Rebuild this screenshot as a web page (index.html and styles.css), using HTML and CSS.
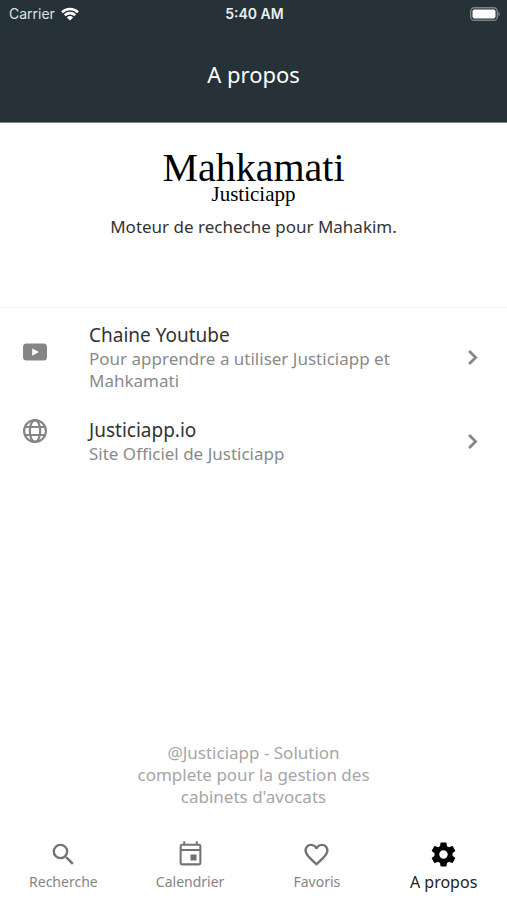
FILE: index.html
```html
<!DOCTYPE html>
<html lang="fr">
<head>
<meta charset="utf-8">
<meta name="viewport" content="width=device-width, initial-scale=1">
<title>A propos</title>
<link rel="stylesheet" href="styles.css">
</head>
<body>
<header class="app-bar">
  <div class="status">
    <span class="carrier">Carrier
      <svg class="wifi" viewBox="0 0 18 14" aria-hidden="true"><path d="M1 5.2a11.5 11.5 0 0 1 16 0M3.8 8.2a7.5 7.5 0 0 1 10.4 0" fill="none" stroke="currentColor" stroke-width="2.6"/><path d="M9 13.5 5.9 10.4a4.4 4.4 0 0 1 6.2 0z" fill="currentColor"/></svg>
    </span>
    <time class="time">5:40 AM</time>
    <svg class="battery" viewBox="0 0 30 14" aria-hidden="true"><rect x=".7" y=".7" width="26.6" height="12.6" rx="3.6" fill="none" stroke="#7b8387" stroke-width="1.4"/><rect x="2.5" y="2.5" width="23" height="9" rx="2" fill="#fff"/><path d="M28.3 4.8q1.7.7 1.7 2.2t-1.7 2.2z" fill="#7b8387"/></svg>
  </div>
  <h1 class="title">A propos</h1>
</header>
<main class="content">
  <section class="brand">
    <h2 class="brand-name">Mahkamati</h2>
    <p class="brand-sub">Justiciapp</p>
    <p class="tagline">Moteur de recheche pour Mahakim.</p>
  </section>
  <nav class="links" aria-label="Liens">
    <a class="tile tile-tall" href="#youtube">
      <svg class="tile-icon" viewBox="0 0 24 24" aria-hidden="true"><path fill="currentColor" fill-rule="evenodd" d="M3.5 3.5h17A3.5 3.5 0 0 1 24 7v10a3.5 3.5 0 0 1-3.5 3.5h-17A3.5 3.5 0 0 1 0 17V7a3.5 3.5 0 0 1 3.5-3.5zM9.2 8.5v7.2l6.8-3.6z"/></svg>
      <span class="tile-text"><span class="tile-title">Chaine Youtube</span><span class="tile-sub">Pour apprendre a utiliser Justiciapp et Mahkamati</span></span>
      <svg class="chevron" viewBox="0 0 24 24" aria-hidden="true"><path fill="currentColor" stroke="currentColor" stroke-width=".4" d="M10 6 8.59 7.41 13.17 12l-4.58 4.59L10 18l6-6z"/></svg>
    </a>
    <a class="tile" href="#site">
      <svg class="tile-icon" viewBox="0 0 24 24" aria-hidden="true"><g fill="none" stroke="currentColor" stroke-width="2.2"><circle cx="12" cy="12" r="10.9"/><ellipse cx="12" cy="12" rx="5.2" ry="10.9"/><path d="M2 8h20M2 16h20"/></g></svg>
      <span class="tile-text"><span class="tile-title">Justiciapp.io</span><span class="tile-sub">Site Officiel de Justiciapp</span></span>
      <svg class="chevron" viewBox="0 0 24 24" aria-hidden="true"><path fill="currentColor" stroke="currentColor" stroke-width=".4" d="M10 6 8.59 7.41 13.17 12l-4.58 4.59L10 18l6-6z"/></svg>
    </a>
  </nav>
  <p class="credit">@Justiciapp - Solution complete pour la gestion des cabinets d'avocats</p>
</main>
<nav class="tabs" aria-label="Navigation">
  <a class="tab" href="#recherche"><svg class="tab-icon" viewBox="0 0 24 24" aria-hidden="true"><path fill="currentColor" d="M15.5 14h-.79l-.28-.27A6.471 6.471 0 0 0 16 9.5 6.5 6.5 0 1 0 9.5 16c1.61 0 3.09-.59 4.23-1.57l.27.28v.79l5 4.99L20.49 19l-4.99-5zm-6 0C7.01 14 5 11.99 5 9.5S7.01 5 9.5 5 14 7.01 14 9.5 11.99 14 9.5 14z"/></svg>Recherche</a>
  <a class="tab" href="#calendrier"><svg class="tab-icon" viewBox="0 0 24 24" aria-hidden="true"><path fill="currentColor" fill-rule="evenodd" d="M6 1h1.6v2h8.8V1H18v2h1a2 2 0 0 1 2 2v14a2 2 0 0 1-2 2H5a2 2 0 0 1-2-2V5a2 2 0 0 1 2-2h1zM4.7 4.7v2.8h14.6V4.7zM4.7 9.2v10.1h14.6V9.2zM12 12h5v5h-5z"/></svg>Calendrier</a>
  <a class="tab" href="#favoris"><svg class="tab-icon" viewBox="0 0 24 24" aria-hidden="true"><path fill="currentColor" d="M16.5 3c-1.74 0-3.41.81-4.5 2.09C10.91 3.81 9.24 3 7.5 3 4.42 3 2 5.42 2 8.5c0 3.78 3.4 6.86 8.55 11.54L12 21.35l1.45-1.32C18.6 15.36 22 12.28 22 8.5 22 5.42 19.58 3 16.5 3zm-4.4 15.55-.1.1-.1-.1C7.14 14.24 4 11.39 4 8.5 4 6.5 5.5 5 7.5 5c1.54 0 3.04.99 3.57 2.36h1.87C13.46 5.99 14.96 5 16.5 5c2 0 3.5 1.5 3.5 3.5 0 2.89-3.14 5.74-7.9 10.05z"/></svg>Favoris</a>
  <a class="tab tab-active" href="#apropos" aria-current="page"><svg class="tab-icon" viewBox="0 0 24 24" aria-hidden="true"><path fill="currentColor" d="M19.43 12.98c.04-.32.07-.64.07-.98s-.03-.66-.07-.98l2.11-1.65c.19-.15.24-.42.12-.64l-2-3.46c-.12-.22-.39-.3-.61-.22l-2.49 1c-.52-.4-1.08-.73-1.69-.98l-.38-2.65A.488.488 0 0 0 14 2h-4c-.25 0-.46.18-.49.42l-.38 2.65c-.61.25-1.17.59-1.69.98l-2.49-1c-.23-.09-.49 0-.61.22l-2 3.46c-.13.22-.07.49.12.64l2.11 1.65c-.04.32-.07.65-.07.98s.03.66.07.98l-2.11 1.65c-.19.15-.24.42-.12.64l2 3.46c.12.22.39.3.61.22l2.49-1c.52.4 1.08.73 1.69.98l.38 2.65c.03.24.24.42.49.42h4c.25 0 .46-.18.49-.42l.38-2.65c.61-.25 1.17-.59 1.69-.98l2.49 1c.23.09.49 0 .61-.22l2-3.46c.12-.22.07-.49-.12-.64zM12 15.5A3.5 3.5 0 1 1 12 8.5a3.5 3.5 0 0 1 0 7z"/></svg>A propos</a>
</nav>
</body>
</html>
```
FILE: styles.css
```css
* { box-sizing: border-box; }
body {
  margin: 0;
  min-height: 100vh;
  display: flex;
  flex-direction: column;
  background: #fff;
  color: #333;
  font-family: "Noto Sans", sans-serif;
}
h1, h2, p { margin: 0; font-weight: 400; }
a { color: inherit; text-decoration: none; }
svg { display: block; flex: none; }

.app-bar { background: #263238; color: #fff; border-bottom: 1px solid #7d8488; }
.status {
  display: grid;
  grid-template-columns: 1fr auto 1fr;
  align-items: center;
  height: 27px;
  padding: 0 7px 0 9px;
  font: 14px/20px Inter, sans-serif;
}
.carrier { display: flex; align-items: center; gap: 6px; color: #dfe2e3; }
.wifi { width: 18px; height: 14px; color: #fff; }
.time { font-weight: 600; color: #eceeef; }
.battery { width: 30px; height: 14px; justify-self: end; }
.title { font-size: 22px; line-height: 95px; text-align: center; }

.content { flex: 1; display: flex; flex-direction: column; }
.brand {
  padding: 30px 16px 69px;
  text-align: center;
  border-bottom: 1px solid #f4f4f4;
}
.brand-name, .brand-sub { color: #000; font-family: "Liberation Serif", serif; }
.brand-name { font-size: 40px; line-height: 30px; }
.brand-sub { font-size: 21px; line-height: 22px; margin-bottom: 11px; }
.tagline { font-size: 17px; line-height: 22px; }

.links { display: flex; flex-direction: column; }
.tile {
  display: flex;
  align-items: center;
  gap: 42px;
  min-height: 70px;
  padding: 8px 20px 8px 23px;
}
.tile-tall { min-height: 98px; }
.tile-icon { width: 24px; height: 24px; color: #858585; align-self: flex-start; margin-top: 5px; }
.tile-tall .tile-icon { margin-top: 24px; }
.tile-text { flex: 1; display: flex; flex-direction: column; }
.tile-title { font-size: 19px; line-height: 26px; }
.tile-sub { font-size: 17px; line-height: 22px; color: #8a8a8a; }
.chevron { width: 29px; height: 29px; color: #858585; }

.credit {
  width: 240px;
  margin: auto auto 0;
  padding-bottom: 24px;
  font-size: 17px;
  line-height: 22px;
  text-align: center;
  color: #a6a6a6;
}
.tabs { display: grid; grid-template-columns: repeat(4, 1fr); height: 68px; }
.tab {
  display: flex;
  flex-direction: column;
  align-items: center;
  padding-top: 8px;
  gap: 4px;
  font-size: 14px;
  line-height: 18px;
  color: #858585;
}
.tab-icon { width: 29px; height: 29px; color: #737373; }
.tab-active { font-size: 16px; color: #222; }
.tab-active .tab-icon { color: #000; }
```
